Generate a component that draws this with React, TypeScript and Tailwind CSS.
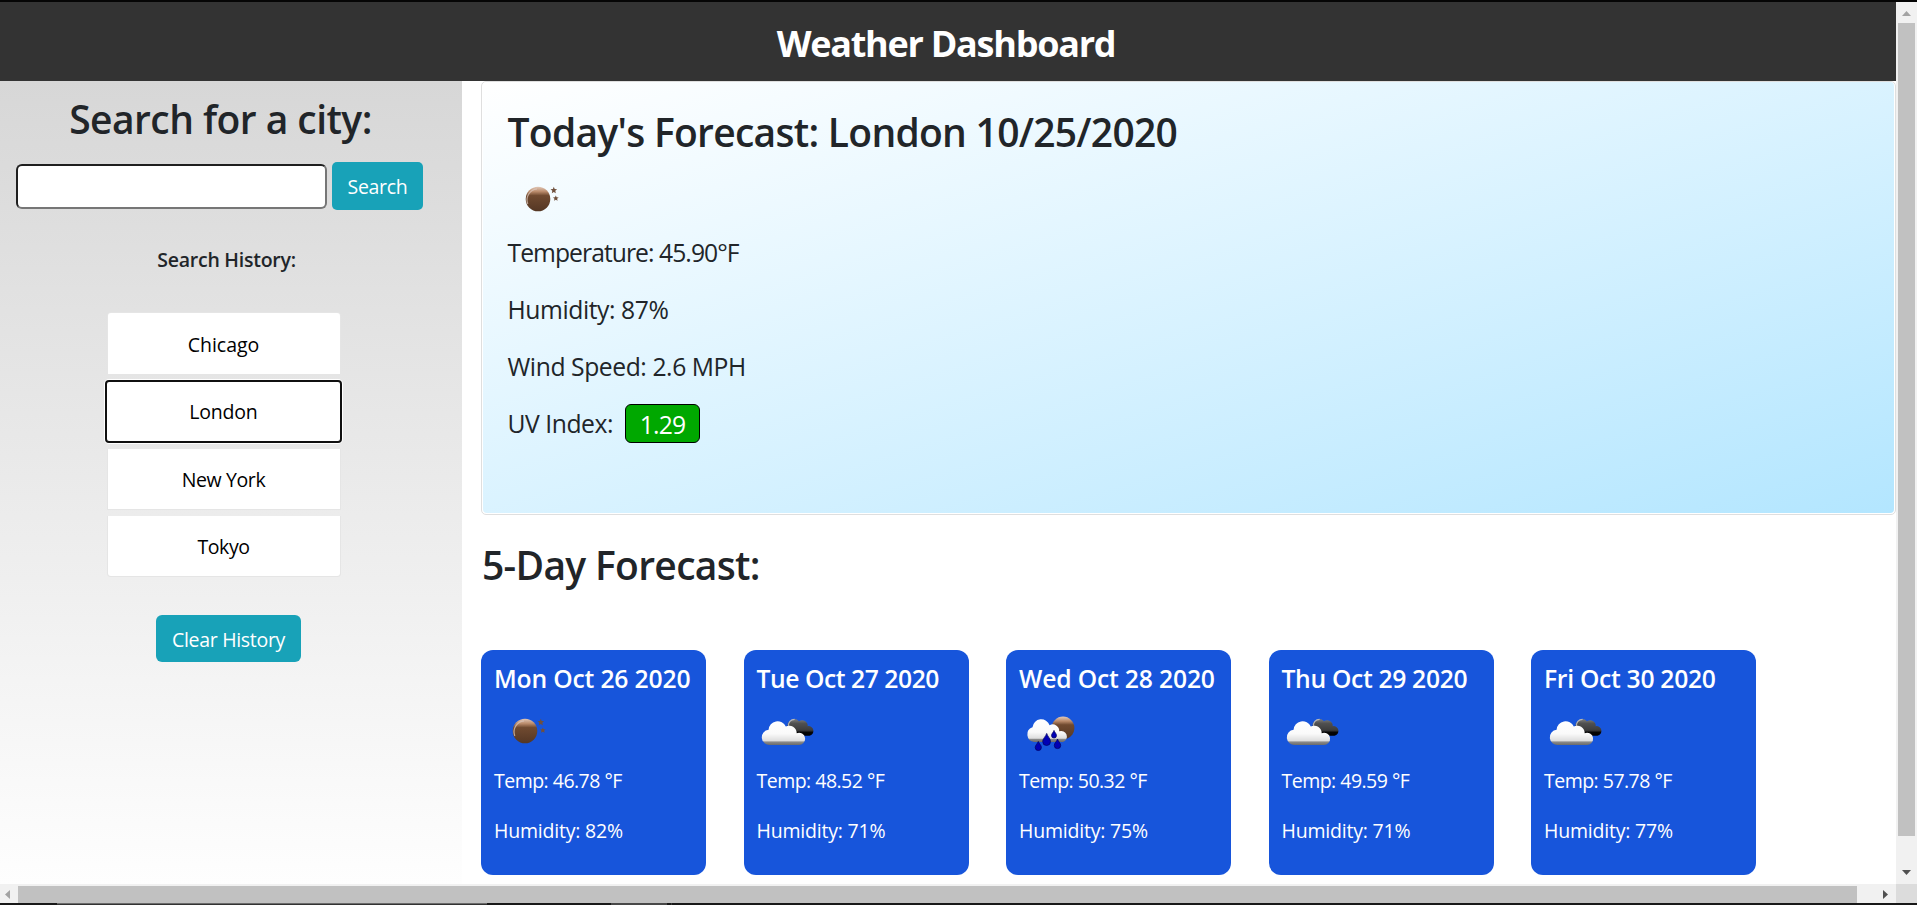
import React from "react";

type IconKind = "moon" | "clouds" | "rain";

function WeatherIcon({ kind, id, className }: { kind: IconKind; id: string; className: string }) {
  const moon = `moon-${id}`;
  const light = `light-${id}`;
  const dark = `dark-${id}`;
  return (
    <svg viewBox="0 0 50 50" width="50" height="50" className={className} aria-hidden="true">
      <defs>
        <linearGradient id={moon} x1="0" y1="0" x2="0" y2="1">
          <stop offset="0" stopColor="#e2c8b8" />
          <stop offset="0.2" stopColor="#b98a6a" />
          <stop offset="0.36" stopColor="#704a30" />
          <stop offset="1" stopColor="#543724" />
        </linearGradient>
        <linearGradient id={light} gradientUnits="userSpaceOnUse" x1="0" y1="14" x2="0" y2={kind === "rain" ? 36 : 39}>
          <stop offset="0" stopColor="#ffffff" />
          <stop offset="0.55" stopColor="#fafafa" />
          <stop offset="0.83" stopColor="#dedede" />
          <stop offset="0.88" stopColor="#8a8a8a" />
          <stop offset="1" stopColor="#6a6a6a" />
        </linearGradient>
        <linearGradient id={dark} gradientUnits="userSpaceOnUse" x1="0" y1="12" x2="0" y2="30">
          <stop offset="0" stopColor="#8a8a8a" />
          <stop offset="0.3" stopColor="#505050" />
          <stop offset="0.68" stopColor="#3c3c3c" />
          <stop offset="0.8" stopColor="#050505" />
          <stop offset="1" stopColor="#000000" />
        </linearGradient>
      </defs>
      {kind === "moon" && (
        <>
          <circle cx="25" cy="25" r="12.3" fill={`url(#${moon})`} />
          <path d="M14.800 30A11.200 11.200 0 0 1 24 14.800" fill="none" stroke="#dcc6b9" strokeWidth="1.200" opacity="0.75" />
          <path
            d="m40.800 12.800.9 2.200 2.400.2-1.800 1.600.5 2.400-2-1.300-2 1.300.5-2.400-1.800-1.600 2.400-.2zM42.800 21.400l.8 1.800 2.100.2-1.600 1.300.5 2.100-1.800-1.100-1.800 1.100.5-2.100-1.600-1.300 2.100-.2z"
            fill="#70503d"
          />
        </>
      )}
      {kind === "clouds" && (
        <>
          <path
            d="M26 22a6.600 6.600 0 0 1 11-6.700 5.500 5.500 0 0 1 8.700 4.900 4.800 4.800 0 1 1 1.800 9.500H32z"
            fill={`url(#${dark})`}
          />
          <path d="M26.600 20.500a6 6 0 0 1 6-7.200" fill="none" stroke="#c8c8c8" strokeWidth="1.200" opacity="0.8" />
          <path
            d="M8.200 38.900a7.500 7.500 0 0 1-1.600-15.100 9 9 0 0 1 17.200-3.200 7.400 7.400 0 0 1 10.900 6.600 6.100 6.100 0 1 1 1.600 11.700z"
            fill={`url(#${light})`}
          />
        </>
      )}
      {kind === "rain" && (
        <>
          <circle cx="38" cy="22" r="11.4" fill={`url(#${moon})`} />
          <path
            d="M9.200 35.900a7.500 7.500 0 0 1-1.700-14.600 8.800 8.800 0 0 1 17.100-2 6.400 6.400 0 0 1 9.600 6 5.500 5.500 0 1 1 4 10.600z"
            fill={`url(#${light})`}
          />
          <g fill="#0000b4" stroke="#00005c" strokeWidth="0.700">
            <path d="M21.700 27.400c1 3.200 3.800 5.200 3.800 8.200a3.900 3.900 0 0 1-7.800 0c0-3 3-5 4-8.200z" />
            <path d="M29 24.400c.6 2 2.500 3.200 2.500 5.100a2.500 2.500 0 0 1-5 0c0-1.900 1.900-3.100 2.500-5.100z" />
            <path d="M13.300 35.400c.8 2.400 3.100 3.800 3.100 6a3.100 3.100 0 0 1-6.200 0c0-2.200 2.300-3.600 3.100-6z" />
            <path d="M32.500 33c.8 2.600 3.200 4.100 3.200 6.400a3.200 3.200 0 0 1-6.400 0c0-2.300 2.400-3.800 3.200-6.400z" />
          </g>
        </>
      )}
    </svg>
  );
}

const cities = [
  { name: "Chicago", style: "mb-[5px] h-[63px] rounded-t-[4px] border border-black/10 pt-[2px]" },
  {
    name: "London",
    style:
      "-mx-[1.5px] mb-[6px] h-[63px] rounded-[4px] pt-px tracking-[-0.2px] outline-2 -outline-offset-2 outline-[#101010] shadow-[0_0_0_1px_#ffffff]",
  },
  { name: "New York", style: "mb-[6px] h-[61px] border border-t-0 border-black/10 pt-[2px] tracking-[-0.4px]" },
  { name: "Tokyo", style: "h-[61px] rounded-b-[4px] border border-t-0 border-black/10 pt-[2px] tracking-[-0.4px]" },
];

const days: { date: string; icon: IconKind; temp: string; humidity: string; tracking: string }[] = [
  { date: "Mon Oct 26 2020", icon: "moon", temp: "46.78", humidity: "82", tracking: "tracking-[-0.17px]" },
  { date: "Tue Oct 27 2020", icon: "clouds", temp: "48.52", humidity: "71", tracking: "tracking-[-0.45px]" },
  { date: "Wed Oct 28 2020", icon: "rain", temp: "50.32", humidity: "75", tracking: "tracking-[-0.17px]" },
  { date: "Thu Oct 29 2020", icon: "clouds", temp: "49.59", humidity: "71", tracking: "tracking-[-0.33px]" },
  { date: "Fri Oct 30 2020", icon: "clouds", temp: "57.78", humidity: "77", tracking: "tracking-[-0.3px]" },
];

function Sidebar() {
  return (
    <aside className="flex w-[462px] shrink-0 flex-col bg-linear-to-b from-[#d7d7d7] to-[#fefefe] pt-[14px]">
      <h2 className="w-[441px] text-center text-[39px] leading-[48px] font-semibold tracking-[-0.55px]">Search for a city:</h2>
      <form className="mt-[19px] flex items-start gap-[5px] pl-4" onSubmit={(e) => e.preventDefault()}>
        <input
          aria-label="City"
          className="mt-[2px] h-[45px] w-[311px] rounded-[6px] border-2 border-t-[#1f1f1f] border-r-[#767676] border-b-[#767676] border-l-[#1f1f1f] bg-white px-1"
        />
        <button className="h-12 w-[91px] rounded-[5px] bg-[#18a2b8] pt-[2px] text-[19.5px] tracking-[-0.3px] text-white">
          Search
        </button>
      </form>
      <h5 className="mt-[38px] w-[453px] text-center text-[19.5px] leading-6 font-semibold tracking-[-0.25px]">
        Search History:
      </h5>
      <div className="mt-10 ml-[106.5px] flex w-[234px] flex-col">
        {cities.map((c) => (
          <button key={c.name} className={`bg-white text-center text-[19.5px] leading-6 text-black ${c.style}`}>
            {c.name}
          </button>
        ))}
      </div>
      <button className="mt-[38px] ml-[156px] h-[47px] w-[145px] rounded-[6px] bg-[#18a2b8] pt-[2px] text-[19.5px] tracking-[-0.3px] text-white">
        Clear History
      </button>
    </aside>
  );
}

function Today() {
  return (
    <section className="h-[433.5px] rounded-[5px] border border-[#dfdfdf] bg-white p-px pt-0">
      <div className="h-full rounded-[4px] bg-linear-to-br from-white to-[#b3e6ff] pt-[26px] pl-[24.5px]">
        <h2 className="text-[39px] leading-[48px] font-semibold tracking-[-0.72px]">Today's Forecast: London 10/25/2020</h2>
        <WeatherIcon kind="moon" id="today" className="mt-[18px] ml-[5px] overflow-visible" />
        <div className="mt-[14px] flex flex-col gap-[27px] text-[24.7px] leading-[30px]">
          <p className="tracking-[-0.95px]">Temperature: 45.90°F</p>
          <p className="tracking-[-0.43px]">Humidity: 87%</p>
          <p className="tracking-[-0.43px]">Wind Speed: 2.6 MPH</p>
        </div>
        <div className="mt-[22px] flex h-[39px] text-[24.7px] leading-[39px]">
          <p className="w-[117.5px] tracking-[-0.45px] whitespace-nowrap">UV Index:</p>
          <span className="w-[75px] rounded-[6px] border border-black bg-[#00a800] text-center leading-[39px] tracking-[-0.8px] text-white">
            1.29
          </span>
        </div>
      </div>
    </section>
  );
}

function DayCard({ day, index }: { day: (typeof days)[number]; index: number }) {
  return (
    <article className="h-[225px] w-[225px] shrink-0 rounded-[12px] bg-[#1755db] pt-[13.5px] pl-[13px] text-[19.5px] leading-6 whitespace-nowrap text-white">
      <h4 className={`text-[24.7px] leading-[30px] font-semibold ${day.tracking}`}>{day.date}</h4>
      <WeatherIcon kind={day.icon} id={`day-${index}`} className="mt-[12.5px] ml-[5.5px] overflow-visible" />
      <p className="mt-[13px] tracking-[-0.52px]">Temp: {day.temp} °F</p>
      <p className="mt-[26px] tracking-[-0.2px]">Humidity: {day.humidity}%</p>
    </article>
  );
}

export default function App() {
  return (
    <div className="flex h-[905px] w-[1917px] flex-col overflow-hidden bg-white font-['Open_Sans','Noto_Sans',sans-serif] text-[#212529]">
      <div className="h-[2px] shrink-0 bg-[#050505]" />
      <div className="flex h-[882px] shrink-0">
        <div className="flex w-[1896px] shrink-0 flex-col">
          <header className="h-[79px] shrink-0 bg-[#333333] pt-[19px] pr-[4px] text-center">
            <h1 className="text-[36px] leading-[46px] font-bold tracking-[-1.25px] text-white">Weather Dashboard</h1>
          </header>
          <div className="flex flex-1">
            <Sidebar />
            <main className="flex-1 pl-[19px]">
              <Today />
              <h2 className="mt-[26.5px] pl-px text-[39px] leading-[48px] font-semibold tracking-[-0.68px]">
                5-Day Forecast:
              </h2>
              <div className="mt-[61px] flex gap-[37.5px]">
                {days.map((d, i) => (
                  <DayCard key={d.date} day={d} index={i} />
                ))}
              </div>
            </main>
          </div>
        </div>
        <div className="flex w-[21px] flex-col items-center bg-[#f1f1f1]">
          <svg width="9" height="5" viewBox="0 0 9 5" className="mt-[9px]">
            <path d="M0 5 4.500 0 9 5z" fill="#a3a3a3" />
          </svg>
          <div className="mt-[7px] h-[813px] w-[17px] bg-[#c1c1c1]" />
          <svg width="9" height="5" viewBox="0 0 9 5" className="mt-[34px]">
            <path d="M0 0h9L4.500 5z" fill="#505050" />
          </svg>
        </div>
      </div>
      <div className="flex h-[19px] shrink-0 bg-[#f1f1f1]">
        <div className="flex w-[1896px] pt-[2px]">
          <svg width="5" height="9" viewBox="0 0 5 9" className="mt-1 ml-[5px]">
            <path d="M5 0v9L0 4.500z" fill="#a3a3a3" />
          </svg>
          <div className="ml-2 h-[17px] w-[1839px] bg-[#c1c1c1]" />
          <svg width="5" height="9" viewBox="0 0 5 9" className="mt-1 ml-[26px]">
            <path d="M0 0v9l5-4.500z" fill="#505050" />
          </svg>
        </div>
        <div className="w-[21px] bg-[#dcdcdc]" />
      </div>
      <div className="flex h-[2px] shrink-0 bg-[#181818]">
        <div className="ml-[57px] w-[430px] border-t border-[#6b6b6b] bg-[#333333]" />
        <div className="ml-[124px] w-[56px] bg-[#484848]" />
        <div className="ml-1 w-px bg-[#3a3a3a]" />
      </div>
    </div>
  );
}
